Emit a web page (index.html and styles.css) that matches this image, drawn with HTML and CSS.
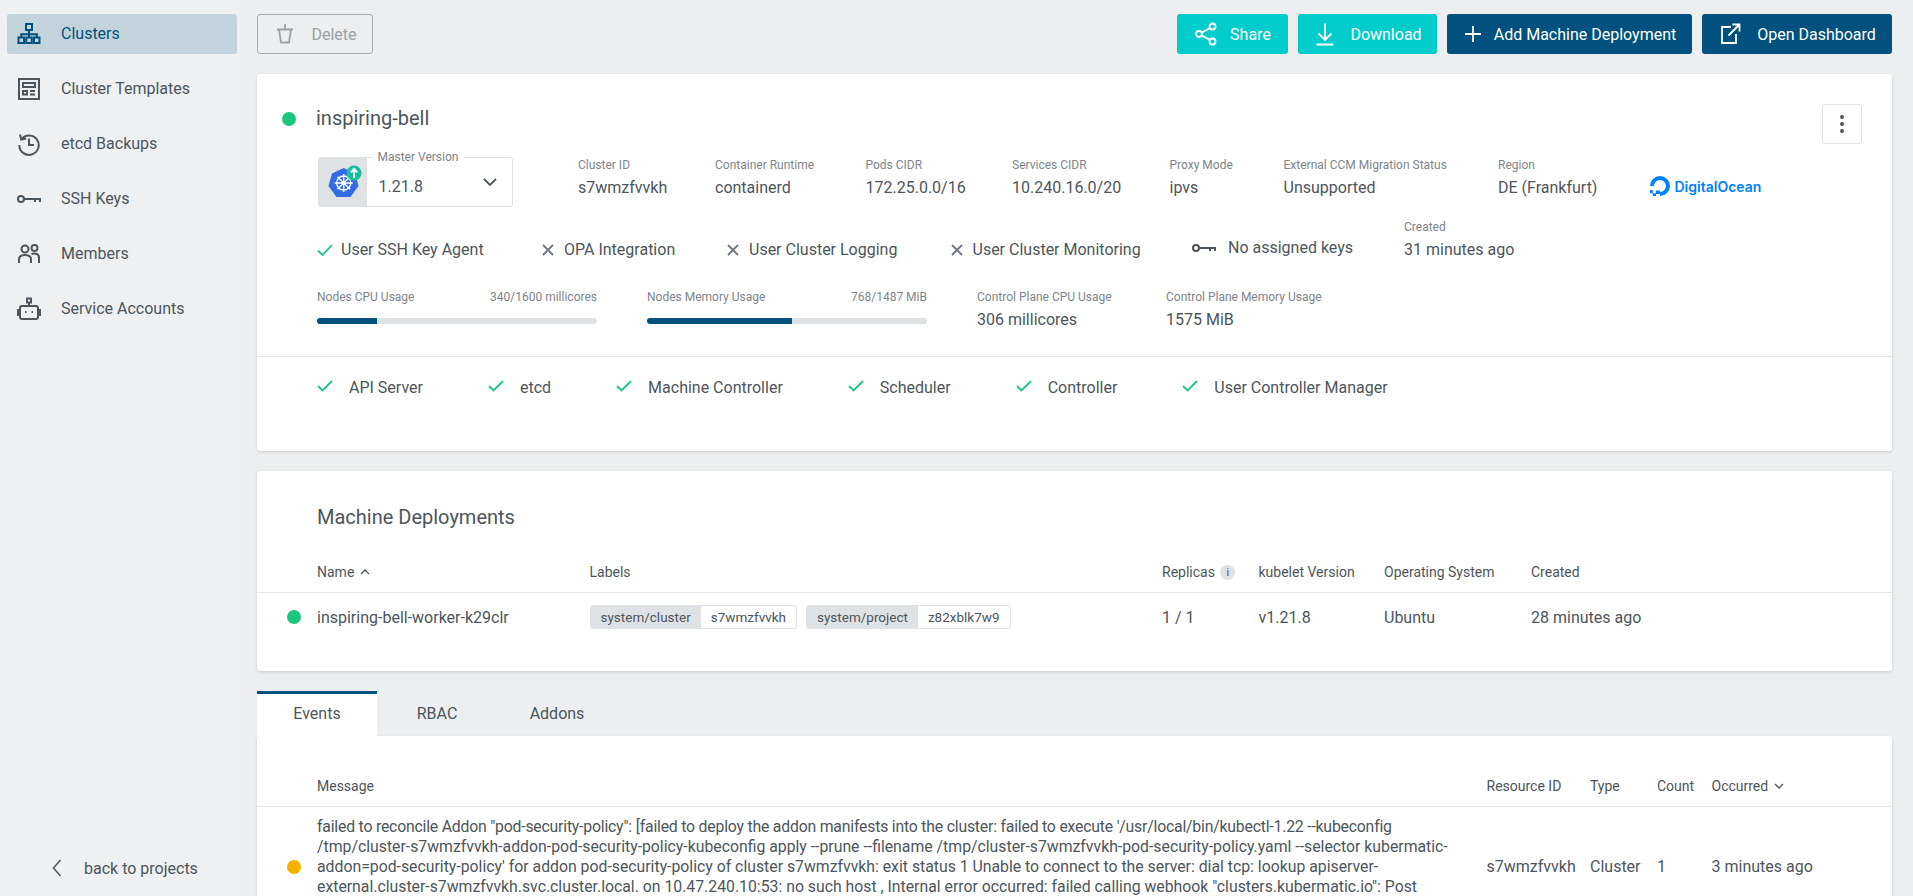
FILE: index.html
```html
<!DOCTYPE html>
<html lang="en">
<head>
  <meta charset="UTF-8">
  <meta name="viewport" content="width=device-width, initial-scale=1.0">
  <title>inspiring-bell</title>
  <link rel="stylesheet" href="styles.css">
</head>
<body>

  <!-- Sidebar -->
  <nav class="sidebar">
    <a class="nav-item active">
      <svg class="nav-icon" viewBox="0 0 24 24"><path d="M9 2h6v6H9zM1.5 15.500h5.500v5.500H1.5zM9.200 15.500h5.600v5.500H9.200zM17 15.500h5.500v5.500H17zM12 8v4.200M4.200 15.500v-3.300h15.600v3.300M12 12.200v3.300" /></svg>
      Clusters
    </a>
    <a class="nav-item">
      <svg class="nav-icon" viewBox="0 0 24 24"><path d="M2 2h20v20H2zM6 6h12v4H6zM6 14h4v3.500H6zM13 14h5M13 17.500h5" /></svg>
      Cluster Templates
    </a>
    <a class="nav-item">
      <svg class="nav-icon" viewBox="0 0 24 24"><path d="M4.500 7A9.700 9.700 0 1 1 2.300 13M3 2.500l1.200 5 5-1M12 6.500V13h5" /></svg>
      etcd Backups
    </a>
    <a class="nav-item">
      <svg class="nav-icon" viewBox="0 0 24 24"><circle cx="4" cy="12" r="3" /><path d="M7 12h17M18 12v3M23 12v3" /></svg>
      SSH Keys
    </a>
    <a class="nav-item">
      <svg class="nav-icon" viewBox="0 0 24 24"><circle cx="8" cy="7" r="3.500" /><circle cx="17.500" cy="6" r="3" /><path d="M2 21v-3.500c0-3 2.500-4.500 6-4.500s6 1.500 6 4.500V21M14.500 12c1-.4 2-.5 3-.5 3 0 4.500 1.500 4.500 4.500v5" /></svg>
      Members
    </a>
    <a class="nav-item">
      <svg class="nav-icon" viewBox="0 0 24 24"><path d="M10 1.500h4v4h-4zM12 5.500V9M5 9h14a2 2 0 0 1 2 2v9a2 2 0 0 1-2 2H5a2 2 0 0 1-2-2v-9a2 2 0 0 1 2-2zM3 13H1v5h2M21 13h2v5h-2M8 15h1.500M14.500 15H16" /></svg>
      Service Accounts
    </a>
    <a class="nav-back">
      <svg class="back-icon" viewBox="0 0 12 20"><path d="M9.500 2L2.500 10l7 8" /></svg>
      back to projects
    </a>
  </nav>

  <main class="main">

    <!-- Toolbar -->
    <div class="toolbar">
      <button class="btn btn-disabled">
        <svg class="btn-icon" viewBox="0 0 24 24"><path d="M4 7.500h16M12 2v5.500M6 7.500l2 13h8l2-13" /></svg>
        Delete
      </button>
      <div class="toolbar-right">
        <button class="btn btn-teal btn-share">
          <svg class="btn-icon" viewBox="0 0 24 24"><circle cx="18.500" cy="4.500" r="3" /><circle cx="5" cy="12" r="3" /><circle cx="18.500" cy="19.500" r="3" /><path d="M16 6L7.700 10.600M7.700 13.400L16 18" /></svg>
          Share
        </button>
        <button class="btn btn-teal btn-download">
          <svg class="btn-icon" viewBox="0 0 24 24"><path d="M12 1.500v16M5.500 11.500l6.500 6.500 6.500-6.500M3.500 22.500h17" /></svg>
          Download
        </button>
        <button class="btn btn-dark btn-add">
          <svg class="btn-icon" viewBox="0 0 24 24"><path d="M12 4v16M4 12h16" /></svg>
          Add Machine Deployment
        </button>
        <button class="btn btn-dark btn-open">
          <svg class="btn-icon" viewBox="0 0 24 24"><path d="M13 5H4v16h14v-9M10.500 13.500L21 3M14.500 2.500H21.500V9.500" /></svg>
          Open Dashboard
        </button>
      </div>
    </div>

    <!-- Cluster details -->
    <section class="card">
      <div class="cluster-head">
        <div class="cluster-name">
          <span class="dot dot-green"></span>
          <h1>inspiring-bell</h1>
        </div>
        <button class="kebab"><span></span><span></span><span></span></button>
      </div>

      <div class="info-row">
        <div class="version-box">
          <div class="version-logo">
            <svg class="k8s-logo" viewBox="0 0 40 40">
              <path class="k8s-hept" d="M20.750 3L32 8.400 35.500 21 27.500 32h-14L5.500 21 9 8.400z" />
              <g class="k8s-wheel"><circle cx="20.750" cy="18" r="7" /><circle cx="20.750" cy="18" r="1.500" /><path d="M20.750 9v18M11.750 18h18M14.400 11.700l12.700 12.600M27.100 11.700L14.400 24.300" /></g>
              <circle class="k8s-badge" cx="31" cy="8" r="7.500" />
              <path class="k8s-arrow" d="M31 13V4M27.800 7.200L31 4l3.200 3.200" />
            </svg>
          </div>
          <span class="version-label">Master Version</span>
          <span class="version-value">1.21.8</span>
          <svg class="chevron" viewBox="0 0 14 8"><path d="M1 1l6 6 6-6" /></svg>
        </div>
        <div class="info"><label>Cluster ID</label><span>s7wmzfvvkh</span></div>
        <div class="info"><label>Container Runtime</label><span>containerd</span></div>
        <div class="info"><label>Pods CIDR</label><span>172.25.0.0/16</span></div>
        <div class="info"><label>Services CIDR</label><span>10.240.16.0/20</span></div>
        <div class="info"><label>Proxy Mode</label><span>ipvs</span></div>
        <div class="info"><label>External CCM Migration Status</label><span>Unsupported</span></div>
        <div class="info"><label>Region</label><span>DE (Frankfurt)</span></div>
        <div class="do-logo">
          <svg class="do-icon" viewBox="2 2 20 20"><path d="M12 20A8 8 0 1 0 4 12" /><path class="do-fill" d="M8 16.500h4V20H8zM4.800 19.200h3.200V22H4.800zM2 16h2.800v3.200H2z" /></svg>
          <span>DigitalOcean</span>
        </div>
      </div>

      <div class="feature-row">
        <div class="feature"><svg class="mark mark-ok" viewBox="0 0 16 16"><path d="M1 8.500l4.500 4.500L15 3" /></svg>User SSH Key Agent</div>
        <div class="feature"><svg class="mark mark-off" viewBox="0 0 16 16"><path d="M3 3l10 10M13 3L3 13" /></svg>OPA Integration</div>
        <div class="feature"><svg class="mark mark-off" viewBox="0 0 16 16"><path d="M3 3l10 10M13 3L3 13" /></svg>User Cluster Logging</div>
        <div class="feature"><svg class="mark mark-off" viewBox="0 0 16 16"><path d="M3 3l10 10M13 3L3 13" /></svg>User Cluster Monitoring</div>
        <div class="feature feature-keys"><svg class="key-icon" viewBox="0 0 24 24"><circle cx="4" cy="12" r="3" /><path d="M7 12h17M18 12v3M23 12v3" /></svg>No assigned keys</div>
        <div class="info"><label>Created</label><span>31 minutes ago</span></div>
      </div>

      <div class="usage-row">
        <div class="usage">
          <div class="usage-top"><label>Nodes CPU Usage</label><label>340/1600 millicores</label></div>
          <div class="bar"><div class="bar-fill" style="width: 21.25%"></div></div>
        </div>
        <div class="usage">
          <div class="usage-top"><label>Nodes Memory Usage</label><label>768/1487 MiB</label></div>
          <div class="bar"><div class="bar-fill" style="width: 51.65%"></div></div>
        </div>
        <div class="info info-usage"><label>Control Plane CPU Usage</label><span>306 millicores</span></div>
        <div class="info info-usage"><label>Control Plane Memory Usage</label><span>1575 MiB</span></div>
      </div>

      <div class="health-row">
        <div class="health"><svg class="mark mark-ok" viewBox="0 0 16 16"><path d="M1 8l4.500 4.500L15 3" /></svg>API Server</div>
        <div class="health"><svg class="mark mark-ok" viewBox="0 0 16 16"><path d="M1 8l4.500 4.500L15 3" /></svg>etcd</div>
        <div class="health"><svg class="mark mark-ok" viewBox="0 0 16 16"><path d="M1 8l4.500 4.500L15 3" /></svg>Machine Controller</div>
        <div class="health"><svg class="mark mark-ok" viewBox="0 0 16 16"><path d="M1 8l4.500 4.500L15 3" /></svg>Scheduler</div>
        <div class="health"><svg class="mark mark-ok" viewBox="0 0 16 16"><path d="M1 8l4.500 4.500L15 3" /></svg>Controller</div>
        <div class="health"><svg class="mark mark-ok" viewBox="0 0 16 16"><path d="M1 8l4.500 4.500L15 3" /></svg>User Controller Manager</div>
      </div>
    </section>

    <!-- Machine deployments -->
    <section class="card card-md">
      <h2>Machine Deployments</h2>
      <div class="md-grid md-head">
        <div></div>
        <div>Name <svg class="sort-icon" viewBox="0 0 10 6"><path d="M1 5l4-4 4 4" /></svg></div>
        <div>Labels</div>
        <div>Replicas <span class="info-badge">i</span></div>
        <div>kubelet Version</div>
        <div>Operating System</div>
        <div>Created</div>
      </div>
      <div class="md-grid md-row">
        <div><span class="dot dot-green dot-row"></span></div>
        <div>inspiring-bell-worker-k29clr</div>
        <div class="chips">
          <span class="chip"><span class="chip-key">system/cluster</span><span class="chip-val">s7wmzfvvkh</span></span>
          <span class="chip"><span class="chip-key">system/project</span><span class="chip-val">z82xblk7w9</span></span>
        </div>
        <div>1 / 1</div>
        <div>v1.21.8</div>
        <div>Ubuntu</div>
        <div>28 minutes ago</div>
      </div>
    </section>

    <!-- Tabs -->
    <div class="tabs">
      <div class="tab tab-active">Events</div>
      <div class="tab">RBAC</div>
      <div class="tab">Addons</div>
    </div>
    <section class="card card-events">
      <div class="ev-grid ev-head">
        <div></div>
        <div>Message</div>
        <div>Resource ID</div>
        <div>Type</div>
        <div>Count</div>
        <div>Occurred <svg class="sort-icon" viewBox="0 0 10 6"><path d="M1 1l4 4 4-4" /></svg></div>
      </div>
      <div class="ev-grid ev-row">
        <div><span class="dot dot-orange dot-row"></span></div>
        <div class="ev-msg">failed to reconcile Addon "pod-security-policy": [failed to deploy the addon manifests into the cluster: failed to execute '/usr/local/bin/kubectl-1.22 --kubeconfig<br>/tmp/cluster-s7wmzfvvkh-addon-pod-security-policy-kubeconfig apply --prune --filename /tmp/cluster-s7wmzfvvkh-pod-security-policy.yaml --selector kubermatic-<br>addon=pod-security-policy' for addon pod-security-policy of cluster s7wmzfvvkh: exit status 1 Unable to connect to the server: dial tcp: lookup apiserver-<br>external.cluster-s7wmzfvvkh.svc.cluster.local. on 10.47.240.10:53: no such host , Internal error occurred: failed calling webhook "clusters.kubermatic.io": Post</div>
        <div>s7wmzfvvkh</div>
        <div>Cluster</div>
        <div>1</div>
        <div>3 minutes ago</div>
      </div>
    </section>

  </main>
</body>
</html>
```

FILE: styles.css
```css
* {
  box-sizing: border-box;
}

html, body {
  margin: 0;
  padding: 0;
  height: 100%;
  overflow: hidden;
}

body {
  display: flex;
  font-family: Roboto, sans-serif;
  font-size: 16px;
  color: #4d555c;
  background-color: #eceef0;
}

/* sidebar */
.sidebar {
  display: flex;
  flex-direction: column;
  gap: 15px;
  flex: 0 0 240px;
  height: 896px;
  padding: 14px 3px 0 7px;
  background-color: #eef0f2;
}

.nav-item {
  display: flex;
  align-items: center;
  gap: 20px;
  height: 40px;
  padding: 0 0 1px 10px;
  border-radius: 3px;
}

.nav-item.active {
  background-color: #c3d3dc;
  color: #00517d;
}

.nav-icon {
  flex: none;
  width: 24px;
  height: 24px;
  fill: none;
  stroke: currentColor;
  stroke-width: 2;
}

.nav-back {
  display: flex;
  align-items: center;
  gap: 21px;
  margin-top: auto;
  margin-bottom: 18px;
  padding-left: 44px;
}

.back-icon {
  width: 12px;
  height: 20px;
  fill: none;
  stroke: currentColor;
  stroke-width: 1.5;
}

/* main */
.main {
  flex: 1;
  min-width: 0;
  padding: 14px 21px 0 17px;
}

.toolbar {
  display: flex;
  justify-content: space-between;
  margin-bottom: 20px;
}

.toolbar-right {
  display: flex;
  gap: 10px;
}

.btn {
  display: flex;
  align-items: center;
  justify-content: center;
  gap: 14px;
  height: 40px;
  padding: 0;
  border: 0;
  border-radius: 3px;
  font-family: inherit;
  font-size: 16px;
  color: #fff;
}

.btn-icon {
  flex: none;
  width: 24px;
  height: 24px;
  fill: none;
  stroke: currentColor;
  stroke-width: 1.8;
}

.btn-disabled {
  width: 116px;
  border: 1px solid #a8adb3;
  background: transparent;
  color: #9a9fa5;
}

.btn-teal {
  background-color: #00cccc;
}

.btn-dark {
  background-color: #00517d;
}

.btn-share {
  width: 111px;
  gap: 12px;
}

.btn-download {
  width: 139px;
  gap: 13px;
}

.btn-add {
  width: 245px;
  gap: 9px;
  padding-right: 2px;
}

.btn-open {
  width: 190px;
  gap: 15px;
}

.card {
  margin-bottom: 20px;
  border-radius: 3px;
  background-color: #fff;
  box-shadow: 0 1px 3px rgba(0, 0, 0, 0.15);
}

/* cluster card */
.cluster-head {
  display: flex;
  justify-content: space-between;
  padding: 30px 30px 0 25px;
}

.cluster-name {
  display: flex;
  align-items: center;
  gap: 20px;
  height: 30px;
}

.dot {
  display: inline-block;
  width: 14px;
  height: 14px;
  border-radius: 50%;
}

.dot-green {
  background-color: #1cc67f;
}

.dot-orange {
  background-color: #f7b100;
}

.dot-row {
  display: block;
  margin-left: 30px;
}

h1 {
  margin: 0;
  padding-bottom: 2px;
  font-size: 20px;
  font-weight: 400;
}

.kebab {
  display: flex;
  flex-direction: column;
  align-items: center;
  justify-content: center;
  gap: 3px;
  width: 40px;
  height: 40px;
  border: 1px solid #dfe2e5;
  border-radius: 3px;
  background: #fff;
}

.kebab span {
  width: 4px;
  height: 4px;
  border-radius: 50%;
  background-color: #4d555c;
}

.info-row {
  display: grid;
  grid-template-columns: 260.5px 137px 150.5px 146.5px 157.5px 114px 214.5px 151.5px auto;
  margin-top: 13px;
  padding-left: 60.5px;
}

.info-row .info {
  padding-top: 1px;
}

.info label,
.usage label,
.version-label {
  display: block;
  height: 14px;
  font-size: 12px;
  line-height: 14px;
  color: #7e848c;
}

.info span {
  display: block;
  margin-top: 6px;
  line-height: 20px;
}

.version-box {
  position: relative;
  width: 195px;
  height: 50px;
  padding-left: 60px;
  border: 1px solid #dfe2e5;
  border-radius: 3px;
}

.version-logo {
  position: absolute;
  top: 0;
  left: 0;
  width: 48px;
  height: 48px;
  padding: 7px 4px;
  background-color: #dfe2e5;
}

.k8s-logo {
  display: block;
  width: 40px;
  height: 40px;
  overflow: visible;
}

.k8s-hept {
  fill: #326ce5;
}

.k8s-wheel {
  fill: none;
  stroke: #fff;
  stroke-width: 1.3;
}

.k8s-badge {
  fill: #14c19a;
}

.k8s-arrow {
  fill: none;
  stroke: #fff;
  stroke-width: 2;
}

.version-label {
  position: absolute;
  top: -8px;
  left: 53px;
  padding: 0 6px;
  background-color: #fff;
}

.version-value {
  display: block;
  padding-top: 19px;
  line-height: 20px;
}

.chevron {
  position: absolute;
  top: 20px;
  right: 15px;
  width: 14px;
  height: 8px;
  fill: none;
  stroke: #4d555c;
  stroke-width: 1.8;
}

.do-logo {
  display: flex;
  align-items: center;
  gap: 5px;
  height: 50px;
  padding-top: 8px;
  font-family: Inter, sans-serif;
  font-size: 14px;
  font-weight: 600;
  color: #0080ff;
}

.do-icon {
  width: 20px;
  height: 20px;
  fill: none;
  stroke: #0080ff;
  stroke-width: 4;
}

.do-fill {
  fill: #0080ff;
  stroke: none;
}

.feature-row {
  display: grid;
  grid-template-columns: 223px 185px 223.5px 243.5px 212px auto;
  align-items: end;
  margin-top: 13px;
  padding-left: 60px;
}

.feature {
  display: flex;
  align-items: center;
  gap: 8px;
  line-height: 20px;
}

.feature-keys {
  gap: 12px;
}

.mark {
  flex: none;
  width: 16px;
  height: 16px;
  fill: none;
  stroke-width: 1.8;
}

.mark-ok {
  stroke: #1cc67f;
}

.mark-off {
  stroke: #6f767d;
}

.key-icon {
  flex: none;
  width: 24px;
  height: 24px;
  fill: none;
  stroke: #4d555c;
  stroke-width: 2;
}

.usage-row {
  display: grid;
  grid-template-columns: 280px 280px 139px auto;
  column-gap: 50px;
  margin-top: 30px;
  padding: 0 0 26px 60px;
  border-bottom: 1px solid #e3e5e8;
}

.usage-top {
  display: flex;
  justify-content: space-between;
}

.bar {
  height: 6px;
  margin-top: 14px;
  border-radius: 3px;
  overflow: hidden;
  background-color: #dfe2e5;
}

.bar-fill {
  height: 100%;
  background-color: #00517d;
}

.health-row {
  display: flex;
  gap: 65px;
  padding: 21px 0 53px 60px;
}

.health {
  display: flex;
  align-items: center;
  gap: 16px;
  line-height: 20px;
}

.health .mark {
  margin-top: -4px;
}

/* machine deployments */
.card-md {
  height: 200px;
  padding-top: 34px;
}

h2 {
  margin: 0;
  padding-left: 60px;
  font-size: 20px;
  font-weight: 400;
  line-height: 24px;
}

.md-grid {
  display: grid;
  grid-template-columns: 60px 272.5px 572.5px 96.5px 125.5px 147px auto;
  align-items: center;
}

.md-head {
  height: 41px;
  margin-top: 23px;
  border-bottom: 1px solid #e3e5e8;
  font-size: 14px;
  line-height: 40px;
}

.md-row {
  padding-top: 12px;
}

.sort-icon {
  width: 10px;
  height: 6px;
  margin-left: 2px;
  vertical-align: 2px;
  fill: none;
  stroke: currentColor;
  stroke-width: 1.3;
}

.info-badge {
  display: inline-block;
  width: 15px;
  height: 15px;
  margin-left: 2px;
  border-radius: 50%;
  background-color: #dfe2e5;
  font-size: 11px;
  line-height: 15px;
  text-align: center;
  vertical-align: 1px;
}

.chips {
  display: flex;
  gap: 9px;
}

.chip {
  display: flex;
  height: 24px;
  border: 1px solid #dfe2e5;
  border-radius: 3px;
  overflow: hidden;
  font-size: 13.5px;
  line-height: 22px;
}

.chip-key {
  padding: 0 10px;
  background-color: #dfe2e5;
}

.chip-val {
  padding: 0 10px;
}

/* tabs and events */
.tabs {
  display: flex;
  height: 45px;
}

.tab {
  display: flex;
  align-items: center;
  justify-content: center;
  width: 120px;
}

.tab-active {
  background-color: #fff;
  box-shadow: inset 0 3px #00517d;
}

.card-events {
  height: 300px;
  margin-bottom: 0;
  padding-top: 30px;
}

.ev-grid {
  display: grid;
  grid-template-columns: 60px 1169.5px 103.5px 67px 54.5px auto;
  align-items: center;
}

.ev-head {
  height: 41px;
  border-bottom: 1px solid #e3e5e8;
  font-size: 14px;
  line-height: 40px;
}

.ev-row {
  min-height: 120px;
  padding: 10px 0;
  line-height: 20px;
}

.ev-msg {
  align-self: start;
  font-size: 15.8px;
  white-space: nowrap;
}

.ev-msg::first-line {
  letter-spacing: -0.2px;
}
```
